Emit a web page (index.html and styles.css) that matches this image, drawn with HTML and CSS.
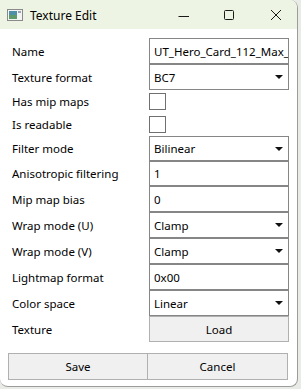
FILE: index.html
```html
<!DOCTYPE html>
<html lang="en">
<head>
    <meta charset="UTF-8">
    <meta name="viewport" content="width=device-width, initial-scale=1.0">
    <title>Texture Edit</title>
    <link rel="stylesheet" href="styles.css">
</head>
<body>
    <div class="window">
        <div class="titlebar">
            <svg class="app-icon" width="16" height="12" viewBox="0 0 16 12">
                <rect x="0.5" y="0.5" width="15" height="11" fill="#f4f4f4" stroke="#8a8a8a"/>
                <rect x="2" y="2" width="8" height="8" fill="#4f8fa8"/>
                <rect x="2" y="6" width="8" height="4" fill="#5e9a6a"/>
                <rect x="11" y="2" width="3" height="2" fill="#9aa5b0"/>
            </svg>
            <span class="title">Texture Edit</span>
            <div class="caption-buttons">
                <svg class="cap-min" width="12" height="12" viewBox="0 0 12 12">
                    <line x1="0.5" y1="6.5" x2="11" y2="6.5" stroke="#1a1a1a" stroke-width="1"/>
                </svg>
                <svg class="cap-max" width="12" height="12" viewBox="0 0 12 12">
                    <rect x="1.5" y="1.5" width="9" height="9" rx="1" fill="none" stroke="#1a1a1a" stroke-width="1"/>
                </svg>
                <svg class="cap-close" width="12" height="12" viewBox="0 0 12 12">
                    <path d="M1 1 L11 11 M11 1 L1 11" stroke="#1a1a1a" stroke-width="1"/>
                </svg>
            </div>
        </div>
        <div class="content">
            <div class="form">
                <label class="field-label">Name</label>
                <div class="textbox">UT_Hero_Card_112_Max_</div>

                <label class="field-label">Texture format</label>
                <div class="combobox"><span>BC7</span><i class="arrow"></i></div>

                <label class="field-label">Has mip maps</label>
                <div class="check-cell"><span class="checkbox"></span></div>

                <label class="field-label">Is readable</label>
                <div class="check-cell"><span class="checkbox"></span></div>

                <label class="field-label">Filter mode</label>
                <div class="combobox"><span>Bilinear</span><i class="arrow"></i></div>

                <label class="field-label">Anisotropic filtering</label>
                <div class="textbox">1</div>

                <label class="field-label">Mip map bias</label>
                <div class="textbox">0</div>

                <label class="field-label">Wrap mode (U)</label>
                <div class="combobox"><span>Clamp</span><i class="arrow"></i></div>

                <label class="field-label">Wrap mode (V)</label>
                <div class="combobox"><span>Clamp</span><i class="arrow"></i></div>

                <label class="field-label">Lightmap format</label>
                <div class="textbox">0x00</div>

                <label class="field-label">Color space</label>
                <div class="combobox"><span>Linear</span><i class="arrow"></i></div>

                <label class="field-label">Texture</label>
                <button class="btn">Load</button>
            </div>
            <div class="actions">
                <button class="btn">Save</button>
                <button class="btn">Cancel</button>
            </div>
        </div>
    </div>
</body>
</html>
```

FILE: styles.css
```css
body {
    margin: 0;
    padding: 0;
    background-color: #e9ece6;
    font-family: "Noto Sans", "Open Sans", sans-serif;
    font-size: 11.5px;
    color: #000;
}
.window {
    width: 298px;
    height: 387px;
    box-sizing: border-box;
    background-color: #ffffff;
    border-right: 1px solid #9c9c9c;
    border-bottom: 1px solid #9c9c9c;
    border-radius: 0 8px 8px 8px;
    overflow: hidden;
}
.titlebar {
    height: 29px;
    background-color: #eef4e4;
    display: flex;
    align-items: center;
    font-size: 12px;
}
.app-icon {
    margin-left: 7px;
    margin-top: 1px;
}
.title {
    margin-left: 7px;
    margin-top: 1px;
}
.caption-buttons {
    margin-left: auto;
    display: flex;
    align-items: center;
}
.cap-min {
    margin-right: 33px;
    margin-top: 2px;
}
.cap-max {
    margin-right: 35px;
}
.cap-close {
    margin-right: 15px;
}
.content {
    padding: 9px 8px 0 8px;
}
.form {
    display: grid;
    grid-template-columns: 141px 140px;
    grid-template-rows: 26px 26px 23px 23px 25px 25px 26px 26px 26px 26px 26px 26px;
}
.field-label {
    display: flex;
    align-items: center;
    padding-left: 4px;
}
.textbox,
.combobox {
    box-sizing: border-box;
    border: 1px solid #868686;
    padding: 0 4px;
    display: flex;
    align-items: center;
    white-space: nowrap;
    overflow: hidden;
}
.combobox span {
    flex: 1;
}
.arrow {
    width: 0;
    height: 0;
    border-left: 4px solid transparent;
    border-right: 4px solid transparent;
    border-top: 4px solid #111;
    margin-right: 1px;
}
.check-cell {
    display: flex;
    align-items: center;
}
.checkbox {
    width: 17px;
    height: 17px;
    box-sizing: border-box;
    border: 1px solid #707070;
    background-color: #fff;
}
.btn {
    font-family: inherit;
    font-size: 11.5px;
    color: #000;
    background-color: #f0f0f0;
    border: 1px solid #b0b0b0;
    padding: 0;
    margin: 0;
}
.actions {
    display: grid;
    grid-template-columns: 140px 140px;
    height: 27px;
    margin-top: 11px;
}
.actions .btn + .btn {
    margin-left: -1px;
}
```
